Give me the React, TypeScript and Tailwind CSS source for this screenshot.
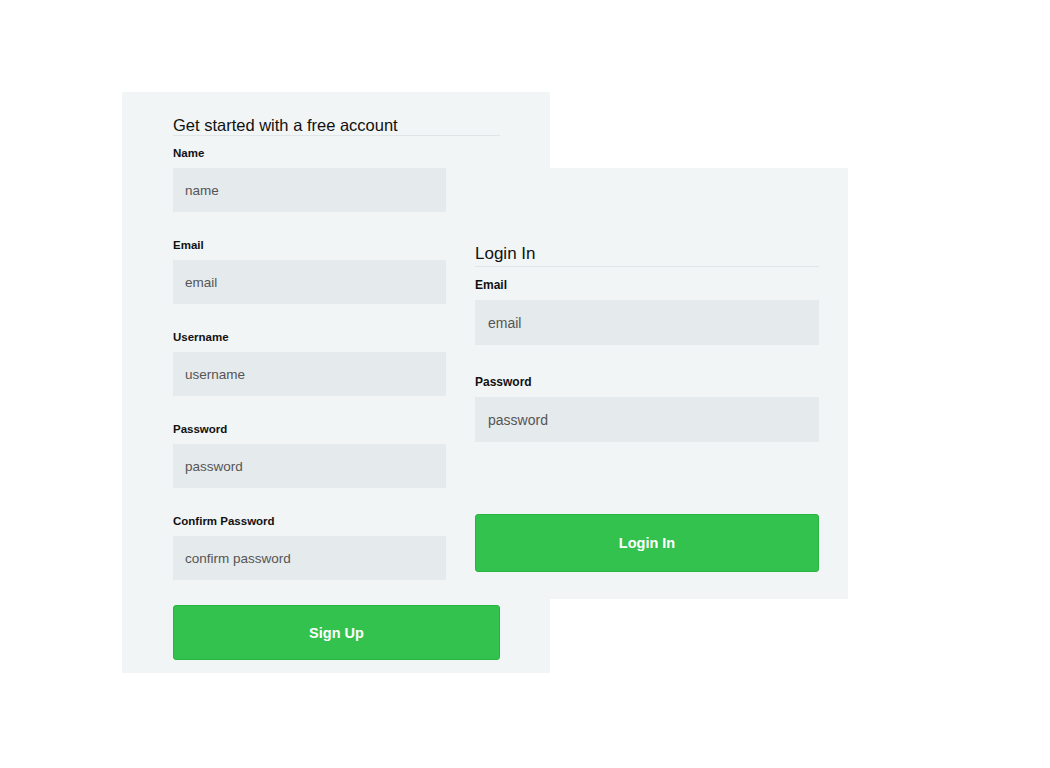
import React from "react";

const font = { fontFamily: '"Liberation Sans", Arial, sans-serif' };

function SignField({ label, placeholder }: { label: string; placeholder: string }) {
  return (
    <div className="flex flex-col">
      <label className="text-[11.5px] leading-[15px] font-bold text-[#111] mb-[7px]">{label}</label>
      <input
        placeholder={placeholder}
        className="w-[273px] h-[44px] bg-[#e5eaec] px-3 text-[13.5px] text-[#333] placeholder:text-[#555] outline-none"
      />
    </div>
  );
}

function LoginField({ label, placeholder }: { label: string; placeholder: string }) {
  return (
    <div className="flex flex-col">
      <label className="text-[12px] leading-[15px] font-bold text-[#111] mb-[7px]">{label}</label>
      <input
        placeholder={placeholder}
        className="w-[344px] h-[45px] bg-[#e5eaec] px-[13px] text-[14px] text-[#333] placeholder:text-[#555] outline-none"
      />
    </div>
  );
}

export default function App() {
  return (
    <div className="min-h-[768px] w-[1050px] bg-white" style={font}>
      <div className="flex items-start pt-[92px] pl-[122px]">
        <div className="w-[428px] h-[581px] bg-[#f2f5f6] pl-[51px] pt-[23px] flex flex-col shrink-0">
          <h2 className="w-[327px] text-[16.5px] leading-[20px] text-[#111] border-b border-[#e0e5e7]">
            Get started with a free account
          </h2>
          <div className="mt-[10px] flex flex-col gap-[26px]">
            <SignField label="Name" placeholder="name" />
            <SignField label="Email" placeholder="email" />
            <SignField label="Username" placeholder="username" />
            <SignField label="Password" placeholder="password" />
            <SignField label="Confirm Password" placeholder="confirm password" />
          </div>
          <button className="mt-[25px] w-[327px] h-[55px] rounded-[3px] bg-[#33c24d] border border-[#28b440] text-white font-bold text-[14.5px] pt-[2px]">
            Sign Up
          </button>
        </div>
        <div className="relative z-10 ml-[-103px] mt-[76px] w-[401px] h-[431px] bg-[#f2f5f6] pl-[28px] pt-[76px] flex flex-col shrink-0">
          <h2 className="w-[344px] text-[17px] leading-[20px] pb-[2px] text-[#111] border-b border-[#e0e5e7]">
            Login In
          </h2>
          <div className="mt-[11px] flex flex-col gap-[30px]">
            <LoginField label="Email" placeholder="email" />
            <LoginField label="Password" placeholder="password" />
          </div>
          <button className="mt-[72px] w-[344px] h-[58px] rounded-[3px] bg-[#33c24d] border border-[#28b440] text-white font-bold text-[14.5px] pt-[2px]">
            Login In
          </button>
        </div>
      </div>
    </div>
  );
}
